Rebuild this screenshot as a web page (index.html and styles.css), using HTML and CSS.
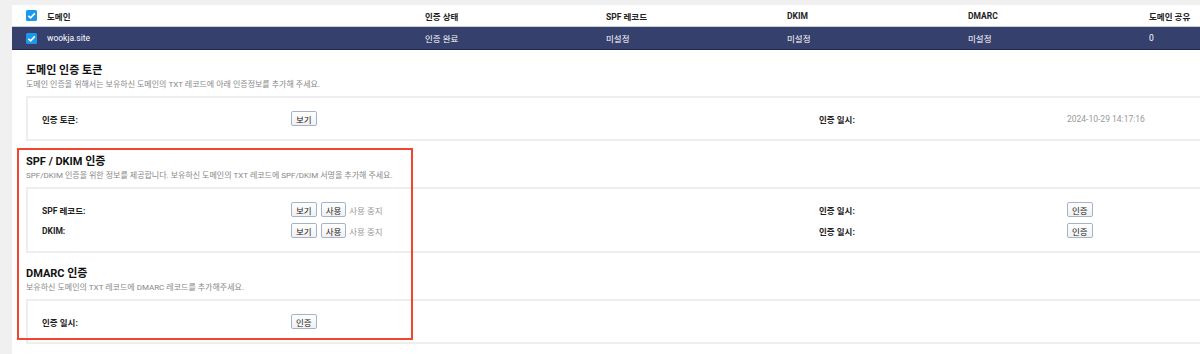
FILE: index.html
```html
<!DOCTYPE html>
<html lang="ko">
<head>
  <meta charset="UTF-8">
  <title>도메인 관리</title>
  <link rel="stylesheet" href="styles.css">
</head>
<body>
  <div class="content">

    <!-- 도메인 목록 -->
    <div class="domain-table">
      <div class="tr head">
        <div class="td check">
          <svg class="cb" viewBox="0 0 11 11"><rect width="11" height="11" rx="1.5" fill="#1c98ea"/><path d="M2.4 5.8 L4.6 7.9 L8.8 3.4" fill="none" stroke="#fff" stroke-width="1.6"/></svg>
        </div>
        <div class="td">도메인</div>
        <div class="td">인증 상태</div>
        <div class="td">SPF 레코드</div>
        <div class="td">DKIM</div>
        <div class="td">DMARC</div>
        <div class="td">도메인 공유</div>
      </div>
      <div class="tr selected">
        <div class="td check">
          <svg class="cb" viewBox="0 0 11 11"><rect width="11" height="11" rx="1.5" fill="#1c98ea"/><path d="M2.4 5.8 L4.6 7.9 L8.8 3.4" fill="none" stroke="#fff" stroke-width="1.6"/></svg>
        </div>
        <div class="td">wookja.site</div>
        <div class="td">인증 완료</div>
        <div class="td">미설정</div>
        <div class="td">미설정</div>
        <div class="td">미설정</div>
        <div class="td">0</div>
      </div>
    </div>

    <!-- 도메인 인증 토큰 -->
    <section class="auth-section">
      <h3>도메인 인증 토큰</h3>
      <p class="desc">도메인 인증을 위해서는 보유하신 도메인의 TXT 레코드에 아래 인증정보를 추가해 주세요.</p>
      <div class="auth-box">
        <div class="auth-row">
          <span class="label">인증 토큰:</span>
          <span class="value"><button class="btn">보기</button></span>
          <span class="label">인증 일시:</span>
          <span class="value date">2024-10-29 14:17:16</span>
        </div>
      </div>
    </section>

    <div class="marked">
      <!-- 강조 표시 -->
      <div class="mark"></div>

      <section class="auth-section">
        <h3>SPF / DKIM 인증</h3>
        <p class="desc">SPF/DKIM 인증을 위한 정보를 제공합니다. 보유하신 도메인의 TXT 레코드에 SPF/DKIM 서명을 추가해 주세요.</p>
        <div class="auth-box">
          <div class="auth-row">
            <span class="label">SPF 레코드:</span>
            <span class="value"><button class="btn">보기</button><button class="btn">사용</button><span class="muted">사용 중지</span></span>
            <span class="label">인증 일시:</span>
            <span class="value"><button class="btn">인증</button></span>
          </div>
          <div class="auth-row">
            <span class="label">DKIM:</span>
            <span class="value"><button class="btn">보기</button><button class="btn">사용</button><span class="muted">사용 중지</span></span>
            <span class="label">인증 일시:</span>
            <span class="value"><button class="btn">인증</button></span>
          </div>
        </div>
      </section>

      <section class="auth-section">
        <h3>DMARC 인증</h3>
        <p class="desc">보유하신 도메인의 TXT 레코드에 DMARC 레코드를 추가해주세요.</p>
        <div class="auth-box">
          <div class="auth-row">
            <span class="label">인증 일시:</span>
            <span class="value"><button class="btn">인증</button></span>
          </div>
        </div>
      </section>
    </div>

  </div>
</body>
</html>
```

FILE: styles.css
```css
/* RESET */
* {
  margin: 0;
  padding: 0;
  box-sizing: border-box;
}

body {
  background: #f0f0f0;
  font-family: Roboto, "Noto Sans CJK KR", sans-serif;
  font-size: 8.5px;
  color: #222;
}

.content {
  margin: 5px 0 0 12px;
  background: #fff;
  min-height: 360px;
  overflow: hidden;
}

/* 도메인 목록 */
.tr {
  display: grid;
  grid-template-columns: 35px 378px 181px 181px 181px 181px 1fr;
  align-items: center;
  height: 23px;
}

.tr .td {
  white-space: nowrap;
}

.td.check {
  padding-left: 14px;
  display: flex;
  align-items: center;
}

.cb {
  width: 11px;
  height: 11px;
}

.tr.head {
  height: 22px;
  font-weight: bold;
  border-bottom: 1px solid #c9d0e2;
}

.tr.selected {
  background: #36406d;
  color: #fff;
  border-bottom: 1px solid #20284f;
}

/* 인증 섹션 */
.auth-section {
  padding: 14px 0 0 14px;
}

.auth-section h3 {
  font-size: 11px;
  line-height: 14px;
  font-weight: bold;
  color: #111;
}

.desc {
  font-size: 8px;
  line-height: 14px;
  color: #888;
  margin-bottom: 4px;
}

.auth-box {
  border: 2px solid #eee;
  border-right: none;
  padding: 10px 0;
}

.auth-row {
  display: grid;
  grid-template-columns: 249px 528px 248px 1fr;
  align-items: center;
  height: 21px;
  padding-left: 14px;
}

.label {
  font-weight: bold;
}

.value {
  display: flex;
  align-items: center;
  gap: 4px;
}

.date {
  color: #999;
}

.muted {
  color: #999;
  margin-left: -1px;
}

.btn {
  font-family: inherit;
  font-size: 8.5px;
  color: #222;
  height: 15px;
  padding: 0 4px;
  border: 1px solid #a4b2cb;
  border-radius: 2px;
  background: linear-gradient(#fff, #f1f1f1);
}

/* 강조 표시 */
.marked {
  position: relative;
}

.mark {
  position: absolute;
  left: 5px;
  top: 7px;
  width: 396px;
  height: 192px;
  border: 2px solid #f2452e;
  pointer-events: none;
}
```
